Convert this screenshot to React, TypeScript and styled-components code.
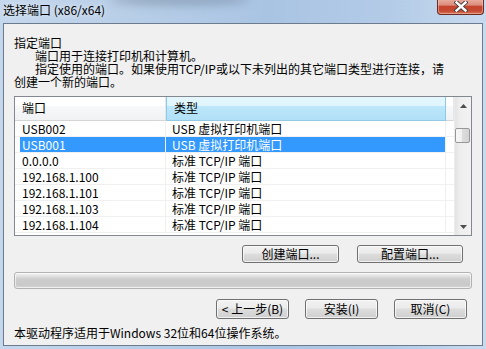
import styled, { createGlobalStyle } from "styled-components";

const GlobalStyle = createGlobalStyle`
  html, body {
    margin: 0;
    padding: 0;
  }
  body {
    width: 486px;
    height: 349px;
    overflow: hidden;
    font-family: "Noto Sans CJK SC", "Noto Sans", sans-serif;
    font-size: 12px;
    color: #000;
  }
`;

const Window = styled.div`
  position: relative;
  width: 486px;
  height: 349px;
  box-sizing: border-box;
  display: flex;
  flex-direction: column;
  overflow: hidden;
  background: linear-gradient(
    to right,
    #c4d7ed 0%,
    #b9cfe8 25%,
    #a9c4e3 55%,
    #b3cbe7 80%,
    #c8daef 100%
  );
`;

const TitleBar = styled.div`
  position: relative;
  height: 23px;
  flex: none;
  display: flex;
  justify-content: space-between;
  align-items: flex-start;

  &::before {
    content: "";
    position: absolute;
    left: 110px;
    top: -6px;
    width: 140px;
    height: 12px;
    border-radius: 50%;
    background: rgba(110, 128, 150, 0.45);
    filter: blur(4px);
  }
`;

const Title = styled.div`
  position: relative;
  margin: 2px 0 0 3px;
  line-height: 16px;
  font-size: 12px;
  color: #000;
  text-shadow: 0 0 6px rgba(255, 255, 255, 0.9);
`;

const CloseButton = styled.div`
  margin: -1px 2px 0 0;
  width: 47px;
  height: 16px;
  box-sizing: border-box;
  border: 1px solid #6a2b22;
  border-top: none;
  border-radius: 0 0 4px 4px;
  background: linear-gradient(
    to bottom,
    #eab0a2 0%,
    #dc8d7c 40%,
    #c5442e 50%,
    #c54a33 80%,
    #d9795c 100%
  );
  box-shadow: inset 0 0 0 1px rgba(255, 210, 200, 0.45);
  display: flex;
  align-items: center;
  justify-content: center;
`;

const Client = styled.div`
  flex: 1;
  margin: 0 3px 3px 3px;
  box-sizing: border-box;
  border: 1px solid #6c7b8d;
  background: #f0f0f0;
  padding: 12px 10px 0 10px;
  display: flex;
  flex-direction: column;
`;

const Intro = styled.div`
  line-height: 13px;
`;

const IntroLine = styled.div<{ $indent?: boolean }>`
  padding-left: ${(p) => (p.$indent ? "21px" : "0")};
  white-space: nowrap;
`;

const ListBox = styled.div`
  margin-top: 8px;
  height: 140px;
  box-sizing: border-box;
  border: 1px solid #828790;
  background: #fff;
  display: flex;
`;

const ListMain = styled.div`
  flex: 1;
  display: flex;
  flex-direction: column;
  overflow: hidden;
`;

const HeaderRow = styled.div`
  display: grid;
  grid-template-columns: 151px 280px 8px;
  height: 24px;
  flex: none;
`;

const HeaderCell = styled.div<{ $active?: boolean }>`
  box-sizing: border-box;
  padding-left: 7px;
  line-height: 22px;
  border-bottom: 1px solid ${(p) => (p.$active ? "#93c9e3" : "#d5d5d5")};
  border-right: 1px solid ${(p) => (p.$active ? "#8cc9ea" : "#e3e7ec")};
  border-left: ${(p) => (p.$active ? "1px solid #8cc9ea" : "none")};
  background: ${(p) =>
    p.$active
      ? "linear-gradient(to bottom, #e5f7fd 0%, #dff4fc 40%, #bde7fa 41%, #b0e0f7 100%)"
      : "linear-gradient(to bottom, #ffffff 0%, #ffffff 40%, #f7f8f9 41%, #f1f2f4 100%)"};
`;

const Row = styled.div`
  display: grid;
  grid-template-columns: 151px 280px 8px;
  height: 16px;
  flex: none;
`;

const Cell = styled.div<{ $selected?: boolean; $first?: boolean; $filler?: boolean }>`
  box-sizing: border-box;
  padding-left: ${(p) => (p.$first ? "7px" : "6px")};
  line-height: 15px;
  white-space: nowrap;
  border-bottom: 1px solid #f0f0f0;
  border-right: ${(p) => (p.$filler ? "none" : "1px solid #f0f0f0")};
  color: ${(p) => (p.$selected ? "#fff" : "#000")};
  background: ${(p) =>
    !p.$selected
      ? "#fff"
      : p.$first
      ? "linear-gradient(to right, #fff 5px, #3399ff 5px)"
      : "#3399ff"};
`;

const ScrollBar = styled.div`
  width: 17px;
  flex: none;
  display: flex;
  flex-direction: column;
  background: linear-gradient(to right, #e3e3e3 0%, #eeeeee 30%, #f2f2f2 100%);
  border-left: 1px solid #ececec;
  box-sizing: border-box;
`;

const ScrollArrow = styled.div`
  height: 17px;
  flex: none;
  display: flex;
  align-items: center;
  justify-content: center;
`;

const ScrollTrack = styled.div`
  flex: 1;
  display: flex;
  flex-direction: column;
`;

const Thumb = styled.div<{ $offset: number }>`
  margin-top: ${(p) => p.$offset}px;
  height: 15px;
  margin-left: 0;
  width: 15px;
  box-sizing: border-box;
  border: 1px solid #979797;
  border-radius: 2px;
  background: linear-gradient(
    to right,
    #f7f7f7 0%,
    #f0f0f0 45%,
    #dcdcdc 50%,
    #d4d4d4 100%
  );
`;

const ButtonRow = styled.div<{ $top: number; $right: number; $gap: number }>`
  margin-top: ${(p) => p.$top}px;
  margin-right: ${(p) => p.$right}px;
  display: flex;
  justify-content: flex-end;
  gap: ${(p) => p.$gap}px;
`;

const Button = styled.div<{ $w: number; $h: number }>`
  width: ${(p) => p.$w}px;
  height: ${(p) => p.$h}px;
  box-sizing: border-box;
  border: 1px solid #707070;
  border-radius: 3px;
  background: linear-gradient(
    to bottom,
    #f2f2f2 0%,
    #ebebeb 45%,
    #dddddd 50%,
    #cfcfcf 100%
  );
  box-shadow: inset 0 0 0 1px rgba(255, 255, 255, 0.7);
  display: flex;
  align-items: center;
  justify-content: center;
  white-space: nowrap;
  line-height: 14px;
`;

const Progress = styled.div`
  margin-top: 9px;
  height: 17px;
  box-sizing: border-box;
  border: 1px solid #b2b2b2;
  border-radius: 3px;
  background: linear-gradient(
    to bottom,
    #f3f3f3 0%,
    #e2e2e2 20%,
    #cdcdcd 40%,
    #c9c9c9 80%,
    #d8d8d8 100%
  );
  box-shadow: inset 0 0 0 1px rgba(255, 255, 255, 0.6);
`;

const Footer = styled.div`
  margin-top: 7px;
  line-height: 13px;
  white-space: nowrap;
`;

const ports = [
  { name: "USB002", type: "USB 虚拟打印机端口" },
  { name: "USB001", type: "USB 虚拟打印机端口", selected: true },
  { name: "0.0.0.0", type: "标准 TCP/IP 端口" },
  { name: "192.168.1.100", type: "标准 TCP/IP 端口" },
  { name: "192.168.1.101", type: "标准 TCP/IP 端口" },
  { name: "192.168.1.103", type: "标准 TCP/IP 端口" },
  { name: "192.168.1.104", type: "标准 TCP/IP 端口" },
];

const CloseIcon = () => (
  <svg width="14" height="11" viewBox="0 0 14 11">
    <path
      d="M2.5 1.5 L11.5 9.5 M11.5 1.5 L2.5 9.5"
      stroke="#3b3b3b"
      strokeWidth="4.2"
      strokeLinecap="square"
      fill="none"
    />
    <path
      d="M2.5 1.5 L11.5 9.5 M11.5 1.5 L2.5 9.5"
      stroke="#ffffff"
      strokeWidth="2.4"
      strokeLinecap="square"
      fill="none"
    />
  </svg>
);

const Arrow = ({ up }: { up?: boolean }) => (
  <svg width="7" height="4" viewBox="0 0 7 4">
    <path d={up ? "M0 4 L3.5 0 L7 4 Z" : "M0 0 L7 0 L3.5 4 Z"} fill="#4d4d4d" />
  </svg>
);

export default function App() {
  return (
    <>
      <GlobalStyle />
      <Window>
        <TitleBar>
          <Title>选择端口 (x86/x64)</Title>
          <CloseButton>
            <CloseIcon />
          </CloseButton>
        </TitleBar>
        <Client>
          <Intro>
            <IntroLine>指定端口</IntroLine>
            <IntroLine $indent>端口用于连接打印机和计算机。</IntroLine>
            <IntroLine $indent>
              指定使用的端口。如果使用TCP/IP或以下未列出的其它端口类型进行连接，请
            </IntroLine>
            <IntroLine>创建一个新的端口。</IntroLine>
          </Intro>

          <ListBox>
            <ListMain>
              <HeaderRow>
                <HeaderCell>端口</HeaderCell>
                <HeaderCell $active>类型</HeaderCell>
                <HeaderCell />
              </HeaderRow>
              {ports.map((p) => (
                <Row key={p.name}>
                  <Cell $first $selected={p.selected}>
                    {p.name}
                  </Cell>
                  <Cell $selected={p.selected}>{p.type}</Cell>
                  <Cell $filler />
                </Row>
              ))}
            </ListMain>
            <ScrollBar>
              <ScrollArrow>
                <Arrow up />
              </ScrollArrow>
              <ScrollTrack>
                <Thumb $offset={14} />
              </ScrollTrack>
              <ScrollArrow>
                <Arrow />
              </ScrollArrow>
            </ScrollBar>
          </ListBox>

          <ButtonRow $top={9} $right={9} $gap={18}>
            <Button $w={97} $h={18}>创建端口...</Button>
            <Button $w={106} $h={18}>配置端口...</Button>
          </ButtonRow>

          <Progress />

          <ButtonRow $top={10} $right={5} $gap={16}>
            <Button $w={73} $h={20}>&lt; 上一步(B)</Button>
            <Button $w={73} $h={20}>安装(I)</Button>
            <Button $w={73} $h={20}>取消(C)</Button>
          </ButtonRow>

          <Footer>本驱动程序适用于Windows 32位和64位操作系统。</Footer>
        </Client>
      </Window>
    </>
  );
}
